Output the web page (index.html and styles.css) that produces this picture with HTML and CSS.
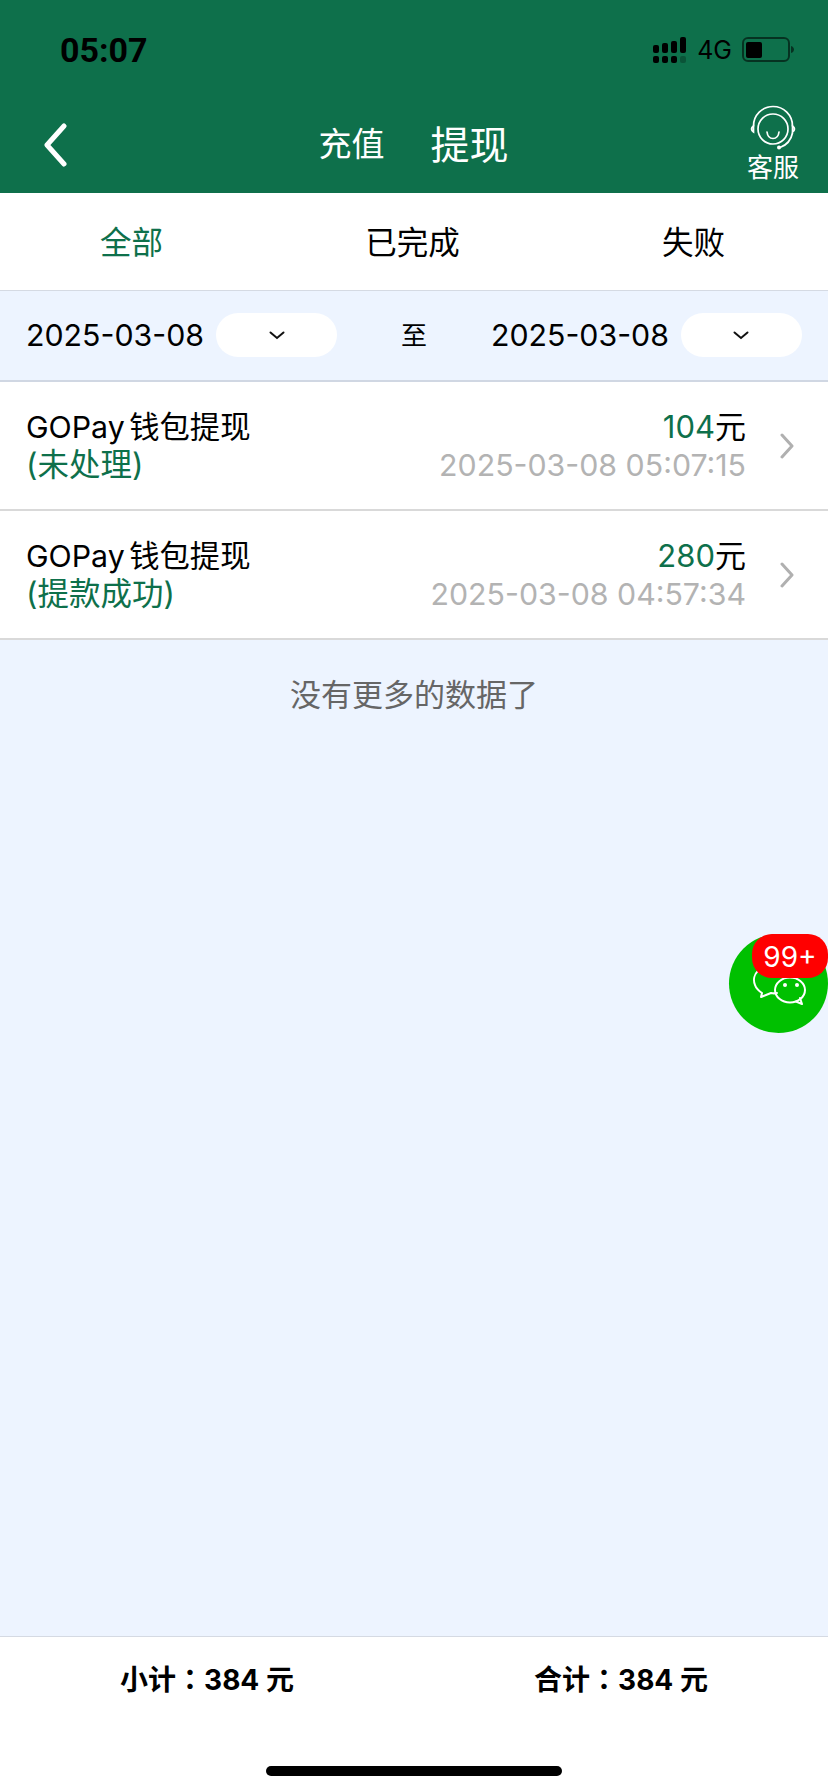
FILE: index.html
```html
<!DOCTYPE html>
<html lang="zh-CN">
<head>
<meta charset="utf-8">
<title>提现</title>
<link rel="stylesheet" href="styles.css">
</head>
<body>
<div class="page">
  <header class="header">
    <div class="status">
      <span class="time">05:07</span>
      <div class="status-right">
        <svg class="signal" width="33" height="26" viewBox="0 0 33 26">
          <g fill="#000">
            <rect x="0" y="8" width="6" height="8" rx="2"/>
            <rect x="9" y="6" width="6" height="10" rx="2"/>
            <rect x="18" y="4" width="6" height="12" rx="2"/>
            <rect x="27" y="0" width="6" height="16" rx="2"/>
            <rect x="0" y="19" width="6" height="7" rx="2"/>
            <rect x="9" y="19" width="6" height="7" rx="2"/>
            <rect x="18" y="19" width="6" height="7" rx="2"/>
            <rect x="27" y="19" width="6" height="7" rx="2" opacity=".25"/>
          </g>
        </svg>
        <span class="net">4G</span>
        <svg class="battery" width="54" height="26" viewBox="0 0 54 26">
          <rect x="1" y="1" width="46" height="23" rx="5" fill="none" stroke="#000" stroke-opacity=".55" stroke-width="2"/>
          <rect x="4" y="5" width="16" height="16" rx="2" fill="#000"/>
          <path d="M49 9c2 .5 3 2 3 3.500s-1 3-3 3.500z" fill="#000" fill-opacity=".55"/>
        </svg>
      </div>
    </div>
    <nav class="nav">
      <svg class="back" width="24" height="44" viewBox="0 0 24 44">
        <path d="M21 3 4 22l17 19" fill="none" stroke="#fff" stroke-width="5" stroke-linecap="round" stroke-linejoin="round"/>
      </svg>
      <div class="switch">
        <span class="switch-off">充值</span>
        <span class="switch-on">提现</span>
      </div>
      <div class="service">
        <svg width="46" height="46" viewBox="0 0 46 46">
          <g fill="none" stroke="#fff" stroke-width="1.700" stroke-linecap="round">
            <circle cx="23" cy="24" r="15"/>
            <path d="M3.500 21A19.500 19.500 0 0 1 42.500 21"/>
            <path d="M42.500 28A19.500 19.500 0 0 1 30 42.500"/>
            <path d="M17 27c.5 4 2.500 6.500 6 6.500s5.500-2.500 6-6.500"/>
            <path d="M3.500 21c-1.500 1-2 2-2 3s.5 2 2 3z"/>
            <path d="M42.500 21c1.500 1 2 2 2 3s-.5 2-2 3z"/>
          </g>
          <circle cx="29" cy="42.500" r="2" fill="#fff"/>
        </svg>
        <span class="service-label">客服</span>
      </div>
    </nav>
  </header>

  <div class="tabs">
    <span class="tab tab-active">全部</span>
    <span class="tab">已完成</span>
    <span class="tab">失败</span>
  </div>

  <div class="filter">
    <div class="date-group">
      <span class="date">2025-03-08</span>
      <span class="pill"><svg width="16" height="9" viewBox="0 0 16 9"><path d="M1.500 1.500 8 7l6.500-5.500" fill="none" stroke="#111" stroke-width="2" stroke-linecap="round"/></svg></span>
    </div>
    <span class="to">至</span>
    <div class="date-group">
      <span class="date">2025-03-08</span>
      <span class="pill"><svg width="16" height="9" viewBox="0 0 16 9"><path d="M1.500 1.500 8 7l6.500-5.500" fill="none" stroke="#111" stroke-width="2" stroke-linecap="round"/></svg></span>
    </div>
  </div>

  <ul class="list">
    <li class="row">
      <div class="row-left">
        <div class="row-title">GOPay 钱包提现</div>
        <div class="row-state">(未处理)</div>
      </div>
      <div class="row-right">
        <div class="row-amount"><span class="num">104</span>元</div>
        <div class="row-time">2025-03-08 05:07:15</div>
      </div>
      <svg class="row-arrow" width="14" height="26" viewBox="0 0 14 26"><path d="M2 2l10 11L2 24" fill="none" stroke="#b0b0b0" stroke-width="3" stroke-linecap="round" stroke-linejoin="round"/></svg>
    </li>
    <li class="row">
      <div class="row-left">
        <div class="row-title">GOPay 钱包提现</div>
        <div class="row-state">(提款成功)</div>
      </div>
      <div class="row-right">
        <div class="row-amount"><span class="num">280</span>元</div>
        <div class="row-time">2025-03-08 04:57:34</div>
      </div>
      <svg class="row-arrow" width="14" height="26" viewBox="0 0 14 26"><path d="M2 2l10 11L2 24" fill="none" stroke="#b0b0b0" stroke-width="3" stroke-linecap="round" stroke-linejoin="round"/></svg>
    </li>
  </ul>

  <main class="content">
    <p class="no-more">没有更多的数据了</p>
  </main>

  <footer class="footer">
    <div class="totals">
      <span class="total">小计：384 元</span>
      <span class="total">合计：384 元</span>
    </div>
    <div class="home-bar"></div>
  </footer>

  <div class="fab">
    <svg class="fab-icon" width="56" height="38" viewBox="0 0 56 38">
      <g fill="none" stroke="#fff" stroke-width="2" stroke-linejoin="round" stroke-linecap="round">
        <path d="M8 0C3 4 2 10 4 15c1 3 4 6 7 8l-1 4 10-4c2 .5 4 .5 6 0"/>
        <ellipse cx="39" cy="20" rx="15" ry="12.500"/>
        <path d="M45 31.500 51 34l-2-6"/>
      </g>
      <circle cx="34" cy="15" r="2" fill="#fff"/>
      <circle cx="46" cy="15" r="2" fill="#fff"/>
    </svg>
    <span class="badge">99+</span>
  </div>
</div>
</body>
</html>
```
FILE: styles.css
```css
* { box-sizing: border-box; }
html, body { margin: 0; padding: 0; }
body {
  font-family: Inter, "Noto Sans CJK SC", sans-serif;
  color: #000;
  background: #edf4ff;
}
.page {
  position: relative;
  width: 828px;
  height: 1792px;
  display: flex;
  flex-direction: column;
  overflow: hidden;
}
.header {
  height: 193px;
  background: #0e704b;
  display: flex;
  flex-direction: column;
}
.status {
  height: 100px;
  padding: 31px 32px 0 60px;
  display: flex;
  justify-content: space-between;
  align-items: flex-start;
}
.time { font-family: Roboto, sans-serif; font-size: 34px; font-weight: 700; line-height: 38px; }
.status-right { display: flex; align-items: center; gap: 11px; padding-top: 6px; }
.net { font-size: 25px; line-height: 26px; }
.battery { margin-left: -1px; }
.nav {
  flex: 1;
  display: flex;
  align-items: flex-start;
  justify-content: space-between;
  padding: 0 29px 0 43px;
}
.back { margin-top: 23px; }
.switch {
  display: flex;
  align-items: center;
  gap: 46px;
  color: #fff;
  height: 44px;
  margin-top: 20px;
  margin-left: 13px;
}
.switch-off { font-size: 33px; }
.switch-on { font-size: 39px; }
.service { display: flex; flex-direction: column; align-items: center; color: #fff; margin-top: 5px; }
.service-label { font-size: 26px; line-height: 34px; }

.tabs {
  height: 98px;
  background: #fff;
  display: flex;
  align-items: center;
  justify-content: space-between;
  padding: 0 103px 4px 100px;
  border-bottom: 1px solid #d5dae3;
}
.tab { font-size: 31.500px; }
.tab-active { color: #0e704b; }

.filter {
  height: 91px;
  display: flex;
  align-items: center;
  justify-content: space-between;
  padding: 0 26px 1px 26px;
  border-bottom: 2px solid #d0d7e3;
}
.date-group { display: flex; align-items: center; gap: 12px; }
.date { font-size: 30.300px; line-height: 44px; }
.pill {
  width: 121px;
  height: 44px;
  border-radius: 22px;
  background: #fff;
  display: flex;
  align-items: center;
  justify-content: center;
}
.to { font-size: 26px; margin-bottom: 4px; }

.list { list-style: none; margin: 0; padding: 0; background: #fff; }
.row {
  height: 129px;
  display: flex;
  align-items: center;
  padding: 0 34px 0 26px;
  border-bottom: 2px solid #d9d9d9;
}
.row-left { flex: 1; }
.row-title { font-size: 30.300px; line-height: 38px; word-spacing: -4px; }
.row-state { font-size: 31.500px; line-height: 38px; color: #0e704b; }
.row-right { text-align: right; }
.row-amount { font-size: 31px; line-height: 38px; }
.num { color: #0e704b; }
.row-time { font-size: 30.300px; line-height: 38px; color: #b3b3b3; }
.row-arrow { margin-left: 34px; }

.content { flex: 1; }
.no-more {
  margin: 35px 0 0;
  text-align: center;
  font-size: 31px;
  line-height: 40px;
  color: #666;
}

.footer {
  height: 156px;
  background: #fff;
  border-top: 1px solid #d5dae3;
  display: flex;
  flex-direction: column;
  align-items: center;
}
.totals {
  align-self: stretch;
  display: grid;
  grid-template-columns: 1fr 1fr;
  justify-items: center;
  padding-top: 24px;
}
.total {
  font-family: Inter, "Noto Sans CJK TC", sans-serif;
  font-feature-settings: "locl" 0;
  font-size: 28px;
  line-height: 38px;
  font-weight: 700;
}
.home-bar {
  width: 296px;
  height: 10px;
  border-radius: 5px;
  background: #000;
  margin-top: 67px;
}

.fab {
  position: absolute;
  left: 729px;
  top: 934px;
  width: 99px;
  height: 99px;
  border-radius: 50%;
  background: #00c000;
}
.fab-icon { position: absolute; left: 22px; top: 36px; }
.badge {
  position: absolute;
  left: 23px;
  top: 0;
  width: 76px;
  height: 44px;
  border-radius: 20px;
  background: #f00;
  color: #fff;
  font-size: 28px;
  line-height: 46px;
  text-align: center;
}
```
